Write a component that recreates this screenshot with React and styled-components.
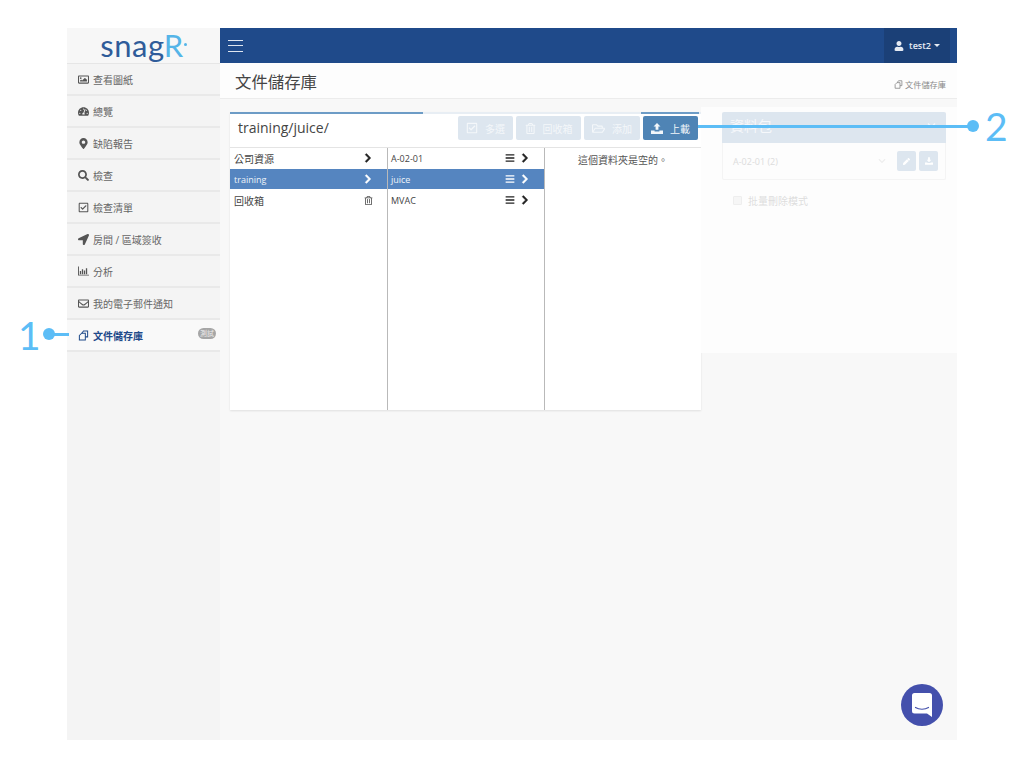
import React from 'react'
import styled, { createGlobalStyle } from 'styled-components'
import {
  FaRegImage, FaTachometerAlt, FaMapMarkerAlt, FaSearch, FaRegCheckSquare, FaLocationArrow,
  FaRegEnvelope, FaChevronRight, FaChevronDown, FaBars, FaRegTrashAlt, FaRegFolderOpen,
  FaPen, FaUser,
} from 'react-icons/fa'

const FONT = '"Open Sans", "Noto Sans CJK TC", sans-serif'
const NAVY = '#1f4a8a'
const SKY = '#5cbdf6'

const GlobalStyle = createGlobalStyle`
  html, body {
    margin: 0;
    padding: 0;
    background: #fff;
    font-family: ${FONT};
    color: #333;
  }
`

const Page = styled.div`
  position: relative;
  width: 1024px;
  height: 768px;
  padding: 28px 67px;
  box-sizing: border-box;
  overflow: hidden;
`

const Frame = styled.div`
  display: flex;
  height: 712px;
  background: #f8f8f8;
`

const Sidebar = styled.nav`
  width: 153px;
  flex: none;
  background: #f4f4f4;
`

const Logo = styled.div`
  height: 35px;
  display: flex;
  align-items: center;
  justify-content: center;
  background: #f7f7f7;
  border-bottom: 1px solid #e6e6e6;
  font-family: Lato, sans-serif;
  font-size: 31px;
  letter-spacing: 0.6px;
  color: #2f5c9a;
  line-height: 1;
`

const LogoAccent = styled.span`
  color: #55b5e8;
  margin-left: -1px;
`

const LogoDot = styled.i`
  width: 3px;
  height: 3px;
  margin: 0 0 3px 0;
  border-radius: 50%;
  background: #55b5e8;
`

const NavRow = styled.div`
  height: 30px;
  display: flex;
  align-items: center;
  padding-left: 11px;
  border-bottom: 2px solid #e9e9e9;
  background: ${props => (props.$active ? '#f9f9f9' : 'transparent')};
  color: ${props => (props.$active ? NAVY : '#666')};
  font-size: 10px;
  font-weight: ${props => (props.$active ? 700 : 400)};
`

const NavIcon = styled.span`
  width: 15px;
  flex: none;
  display: flex;
  color: ${props => (props.$active ? NAVY : '#555')};
  font-size: 11px;
`

const Badge = styled.span`
  margin-left: auto;
  margin-right: 4px;
  margin-top: -3px;
  width: 18px;
  height: 11px;
  border-radius: 6px;
  background: #a6a6a6;
  color: #eee;
  font-size: 7px;
  font-weight: 400;
  line-height: 11px;
  text-align: center;
`

const Main = styled.main`
  flex: 1;
  min-width: 0;
`

const TopBar = styled.header`
  height: 35px;
  display: flex;
  align-items: center;
  justify-content: space-between;
  padding: 0 7px 0 8px;
  background: ${NAVY};
`

const Hamburger = styled.span`
  width: 15px;
  height: 10px;
  border-top: 1px solid #dfe6f0;
  border-bottom: 1px solid #dfe6f0;
  display: flex;
  align-items: center;
  &::before {
    content: '';
    width: 100%;
    height: 1px;
    background: #dfe6f0;
  }
`

const UserTab = styled.div`
  width: 66px;
  height: 35px;
  display: flex;
  align-items: center;
  justify-content: center;
  gap: 5px;
  background: #1b4077;
  color: #e6ebf3;
  font-size: 9px;
  font-weight: 600;
`

const Caret = styled.i`
  border-top: 3px solid #e6ebf3;
  border-left: 3px solid transparent;
  border-right: 3px solid transparent;
  margin-left: -2px;
`

const TitleBar = styled.div`
  height: 36px;
  box-sizing: border-box;
  display: flex;
  align-items: center;
  justify-content: space-between;
  padding: 0 11px 0 15px;
  background: #fdfdfd;
  border-bottom: 1px solid #ececec;
`

const Title = styled.h1`
  margin: 0;
  font-size: 16.4px;
  font-weight: 400;
  color: #444;
`

const Crumb = styled.span`
  display: flex;
  align-items: center;
  gap: 2px;
  margin-top: 7px;
  color: #8a8a8a;
  font-size: 8.2px;
`

const Content = styled.div`
  display: flex;
  align-items: flex-start;
  padding: 8px 0 0 10px;
`

const Explorer = styled.section`
  width: 471px;
  height: 298px;
  margin-top: 5px;
  flex: none;
  background: #fff;
  box-shadow: 0 1px 2px rgba(0, 0, 0, 0.1);
`

const Progress = styled.div`
  height: 2px;
  background: linear-gradient(to right, #6d9cc6 193px, #e8eef4 193px, #e8eef4 411px, #6d9cc6 411px, #6d9cc6 469px, #e8eef4 469px);
`

const Toolbar = styled.div`
  height: 34px;
  box-sizing: border-box;
  display: flex;
  align-items: flex-start;
  padding: 2px 3px 0 8px;
  border-bottom: 1px solid #e4e4e4;
`

const Path = styled.div`
  flex: 1;
  height: 24px;
  line-height: 24px;
  font-size: 14px;
  color: #444;
`

const ToolButton = styled.button`
  width: ${props => props.$width}px;
  height: 24px;
  margin-left: 3px;
  display: flex;
  align-items: center;
  justify-content: center;
  gap: 7px;
  padding: 0;
  border: 0;
  border-radius: 2px;
  background: ${props => (props.$primary ? '#4f84b5' : '#dde6ef')};
  color: ${props => (props.$primary ? '#f2f6fa' : '#f4f7fa')};
  font-family: ${FONT};
  font-size: 10px;
`

const Columns = styled.div`
  display: flex;
  height: 262px;
`

const Column = styled.div`
  width: ${props => props.$width}px;
  flex: none;
  box-sizing: border-box;
  border-right: ${props => (props.$last ? 0 : '1px solid #b9b9b9')};
`

const Row = styled.div`
  height: 20px;
  margin-bottom: 1px;
  display: flex;
  align-items: center;
  padding: 0 14px 0 ${props => props.$inset}px;
  background: ${props => (props.$selected ? '#5585c0' : 'transparent')};
  color: ${props => (props.$selected ? '#eef3f9' : '#444')};
  font-size: ${props => props.$size || 9}px;
`

const RowLabel = styled.span`
  flex: 1;
`

const RowIcons = styled.span`
  display: flex;
  align-items: center;
  gap: 5px;
  font-size: 10px;
  color: ${props => (props.$selected ? '#fff' : '#222')};
`

const Chevron = styled(FaChevronRight)`
  stroke: currentColor;
  stroke-width: 30px;
`

const BinIcon = styled(FaRegTrashAlt)`
  font-size: 9px;
  color: #555;
`

const EmptyNote = styled.p`
  margin: 0;
  padding-top: 5px;
  text-align: center;
  font-size: 10px;
  line-height: 14px;
  color: #555;
`

const Faded = styled.aside`
  flex: 1;
  height: 246px;
  box-sizing: border-box;
  padding: 5px 11px 0 21px;
  background: #fdfdfd;
`

const Package = styled.div`
  border: 1px solid #f4f4f4;
  border-top: 0;
  border-radius: 2px;
`

const PackageHead = styled.div`
  height: 31px;
  box-sizing: border-box;
  margin: 0 -1px;
  display: flex;
  align-items: center;
  justify-content: space-between;
  padding: 0 10px 5px 8px;
  background: #dde6ef;
  border-radius: 2px 2px 0 0;
  color: #f6f8fb;
  font-size: 14px;
`

const PackageRow = styled.div`
  height: 36px;
  display: flex;
  align-items: center;
  gap: 3px;
  padding: 0 7px 0 10px;
  color: #dcdcdc;
  font-size: 9px;
`

const PackageName = styled.span`
  flex: 1;
`

const PackageChevron = styled(FaChevronDown)`
  margin-right: 8px;
  color: #eee;
  font-size: 8px;
`

const SquareButton = styled.span`
  width: 19px;
  height: 20px;
  display: flex;
  align-items: center;
  justify-content: center;
  border-radius: 2px;
  background: #dde6ef;
  color: #fff;
  font-size: 7px;
`

const BulkMode = styled.label`
  display: flex;
  align-items: center;
  gap: 6px;
  padding: 13px 0 0 11px;
  color: #dedede;
  font-size: 10px;
`

const Tick = styled.i`
  width: 7px;
  height: 7px;
  border: 1px solid #eee;
  border-radius: 1px;
  background: #f6f6f6;
`

const Chat = styled.div`
  position: absolute;
  left: 901px;
  top: 684px;
  width: 42px;
  height: 42px;
  display: flex;
  align-items: center;
  justify-content: center;
  border-radius: 50%;
  background: #4450ac;
`

const CalloutDot = styled.i`
  position: absolute;
  left: ${props => props.$x - 6}px;
  top: ${props => props.$y - 6}px;
  width: 12px;
  height: 12px;
  border-radius: 50%;
  background: ${SKY};
`

const CalloutLine = styled.i`
  position: absolute;
  left: ${props => props.$x}px;
  top: ${props => props.$y - 1}px;
  width: ${props => props.$length}px;
  height: 3px;
  background: ${SKY};
`

const CalloutNumber = styled.span`
  position: absolute;
  left: ${props => props.$x}px;
  top: ${props => props.$y}px;
  font-family: Lato, sans-serif;
  font-size: 39px;
  font-weight: 400;
  line-height: 39px;
  color: ${SKY};
`

const FilesIcon = ({ size = 10 }) => (
  <svg width={size} height={size} viewBox="0 0 12 12" fill="none" stroke="currentColor" strokeWidth="1.1">
    <path d="M4.2 3.5 6 1h4.5v6.500H8" />
    <path d="M1.500 6 4 3.500h4v7.500H1.500z" />
  </svg>
)

const ChartIcon = () => (
  <svg width="11" height="10" viewBox="0 0 12 10" fill="currentColor">
    <path d="M0 0h1v9h11v1H0z" />
    <path d="M2 5h1.400v3.500H2zM4.200 3h1.400v5.500H4.200zM6.400 4.500h1.400v4H6.400zM8.600 2h1.400v6.500H8.600z" />
  </svg>
)

const UploadIcon = () => (
  <svg width="12" height="11" viewBox="0 0 12 11" fill="currentColor">
    <path d="M6 0 9.500 3.600H7.400v3.200H4.600V3.600H2.500z" />
    <path d="M0 7.600h3.600v.8h4.800v-.8H12V11H0z" />
  </svg>
)

const DownloadIcon = () => (
  <svg width="8" height="8" viewBox="0 0 12 11" fill="currentColor">
    <path d="M4.600 0h2.800v3.600h2.100L6 7.200 2.500 3.600h2.100z" />
    <path d="M0 7.600h3.600v.8h4.800v-.8H12V11H0z" />
  </svg>
)

const ChatIcon = () => (
  <svg width="20" height="24" viewBox="0 0 20 24">
    <path d="M2.500 0h15A2.500 2.500 0 0 1 20 2.500V24l-5-3.500H2.500A2.500 2.500 0 0 1 0 18V2.500A2.500 2.500 0 0 1 2.500 0z" fill="#fff" />
    <path d="M3.500 14.500c3.500 2.300 9.500 2.300 13 0" fill="none" stroke="#4450ac" strokeWidth="1.200" strokeLinecap="round" />
  </svg>
)

const navItems = [
  { label: '查看圖紙', icon: <FaRegImage /> },
  { label: '總覽', icon: <FaTachometerAlt /> },
  { label: '缺陷報告', icon: <FaMapMarkerAlt /> },
  { label: '檢查', icon: <FaSearch /> },
  { label: '檢查清單', icon: <FaRegCheckSquare /> },
  { label: '房間 / 區域簽收', icon: <FaLocationArrow /> },
  { label: '分析', icon: <ChartIcon /> },
  { label: '我的電子郵件通知', icon: <FaRegEnvelope /> },
  { label: '文件儲存庫', icon: <FilesIcon size={11} />, active: true, badge: '測試' },
]

const App = () => (
  <Page>
    <GlobalStyle />
    <Frame>
      <Sidebar>
        <Logo>snag<LogoAccent>R</LogoAccent><LogoDot /></Logo>
        {navItems.map(item => (
          <NavRow key={item.label} $active={item.active}>
            <NavIcon $active={item.active}>{item.icon}</NavIcon>
            {item.label}
            {item.badge && <Badge>{item.badge}</Badge>}
          </NavRow>
        ))}
      </Sidebar>
      <Main>
        <TopBar>
          <Hamburger />
          <UserTab><FaUser size={10} />test2<Caret /></UserTab>
        </TopBar>
        <TitleBar>
          <Title>文件儲存庫</Title>
          <Crumb><FilesIcon size={9} />文件儲存庫</Crumb>
        </TitleBar>
        <Content>
          <Explorer>
            <Progress />
            <Toolbar>
              <Path>training/juice/</Path>
              <ToolButton $width={55}><FaRegCheckSquare size={12} />多選</ToolButton>
              <ToolButton $width={65}><FaRegTrashAlt size={11} />回收箱</ToolButton>
              <ToolButton $width={56}><FaRegFolderOpen size={13} />添加</ToolButton>
              <ToolButton $width={55} $primary><UploadIcon />上載</ToolButton>
            </Toolbar>
            <Columns>
              <Column $width={158}>
                <Row $inset={4} $size={10}><RowLabel>公司資源</RowLabel><RowIcons><Chevron /></RowIcons></Row>
                <Row $inset={4} $selected><RowLabel>training</RowLabel><RowIcons $selected><Chevron /></RowIcons></Row>
                <Row $inset={4} $size={10}><RowLabel>回收箱</RowLabel><RowIcons><BinIcon /></RowIcons></Row>
              </Column>
              <Column $width={157}>
                <Row $inset={3}><RowLabel>A-02-01</RowLabel><RowIcons><FaBars /><Chevron /></RowIcons></Row>
                <Row $inset={3} $selected><RowLabel>juice</RowLabel><RowIcons $selected><FaBars /><Chevron /></RowIcons></Row>
                <Row $inset={3}><RowLabel>MVAC</RowLabel><RowIcons><FaBars /><Chevron /></RowIcons></Row>
              </Column>
              <Column $width={156} $last>
                <EmptyNote>這個資料夾是空的。</EmptyNote>
              </Column>
            </Columns>
          </Explorer>
          <Faded>
            <Package>
              <PackageHead>資料包<FaChevronDown size={9} /></PackageHead>
              <PackageRow>
                <PackageName>A-02-01 (2)</PackageName>
                <PackageChevron />
                <SquareButton><FaPen /></SquareButton>
                <SquareButton><DownloadIcon /></SquareButton>
              </PackageRow>
            </Package>
            <BulkMode><Tick />批量刪除模式</BulkMode>
          </Faded>
        </Content>
      </Main>
    </Frame>
    <Chat><ChatIcon /></Chat>
    <CalloutNumber $x={18} $y={316}>1</CalloutNumber>
    <CalloutLine $x={49} $y={334} $length={20} />
    <CalloutDot $x={49} $y={334} />
    <CalloutLine $x={698} $y={126} $length={275} />
    <CalloutDot $x={973} $y={126} />
    <CalloutNumber $x={985} $y={107}>2</CalloutNumber>
  </Page>
)

export default App
